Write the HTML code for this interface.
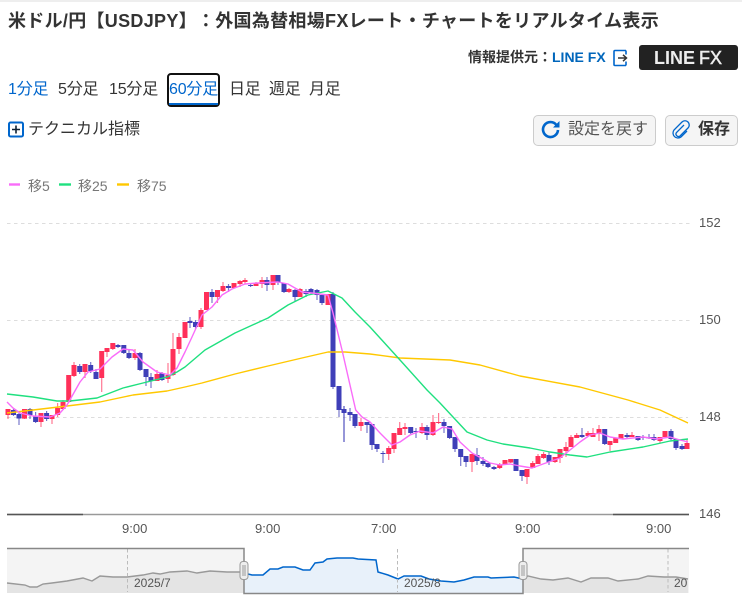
<!DOCTYPE html>
<html lang="ja"><head><meta charset="utf-8"><title>米ドル/円</title>
<style>
html,body{margin:0;padding:0;background:#fff}
#p{position:relative;width:742px;height:614px;overflow:hidden;font-family:"Liberation Sans","Noto Sans CJK JP",sans-serif;color:#333;background:#fff;text-spacing-trim:space-all}
#p div{position:absolute;white-space:nowrap}
.t{font-size:16px;line-height:20px;top:80px;letter-spacing:-.2px}
.b{box-sizing:border-box;background:#f5f5f5;border:1px solid #ccc;border-radius:5px;top:115px;height:31px}
svg{position:absolute;left:0;top:0}
</style></head><body><div id="p">
<div style="left:0;top:0;width:742px;height:2px;background:#eee"></div>
<div style="left:8px;top:9px;font-size:18px;line-height:24px;font-weight:bold;letter-spacing:.3px">米ドル/円【USDJPY】：外国為替相場FXレート・チャートをリアルタイム表示</div>
<div style="left:468px;top:47px;font-size:14px;line-height:20px;font-weight:bold">情報提供元：<span style="color:#0066bb">LINE FX</span></div>
<div style="left:639px;top:45px;width:99px;height:25px;background:#222;border-radius:3px"></div>
<div style="left:654px;top:47px;font-size:18px;line-height:23px;color:#eee;font-weight:bold">LINE <span style="font-weight:normal;margin-left:-1px;-webkit-text-stroke:.5px #eee">FX</span></div>
<div class="t" style="left:8px;color:#0066cc">1分足</div>
<div class="t" style="left:58px">5分足</div>
<div class="t" style="left:109px">15分足</div>
<div style="left:167px;top:73px;width:49px;height:30px;border:2px solid #111;border-radius:4px"></div>
<div style="left:169px;top:103px;width:49px;height:2px;background:#0066cc"></div>
<div class="t" style="left:169px;color:#0066cc">60分足</div>
<div class="t" style="left:229px">日足</div>
<div class="t" style="left:269px">週足</div>
<div class="t" style="left:309px">月足</div>
<div style="left:28px;top:120px;font-size:16px;line-height:20px">テクニカル指標</div>
<div class="b" style="left:533px;width:123px"></div>
<div class="b" style="left:665px;width:73px"></div>
<div style="left:568px;top:120px;font-size:16px;line-height:20px;color:#555">設定を戻す</div>
<div style="left:698px;top:120px;font-size:16px;line-height:20px;font-weight:bold;color:#333">保存</div>
<div style="left:28px;top:177px;font-size:14px;line-height:18px;color:#777">移5</div>
<div style="left:78px;top:177px;font-size:14px;line-height:18px;color:#777">移25</div>
<div style="left:137px;top:177px;font-size:14px;line-height:18px;color:#777">移75</div>
<div style="left:699px;top:215px;font-size:13px;line-height:16px;color:#555">152</div>
<div style="left:699px;top:312px;font-size:13px;line-height:16px;color:#555">150</div>
<div style="left:699px;top:409px;font-size:13px;line-height:16px;color:#555">148</div>
<div style="left:699px;top:506px;font-size:13px;line-height:16px;color:#555">146</div>
<div style="left:122px;top:521px;font-size:13px;line-height:16px;color:#555">9:00</div>
<div style="left:255px;top:521px;font-size:13px;line-height:16px;color:#555">9:00</div>
<div style="left:371px;top:521px;font-size:13px;line-height:16px;color:#555">7:00</div>
<div style="left:515px;top:521px;font-size:13px;line-height:16px;color:#555">9:00</div>
<div style="left:646px;top:521px;font-size:13px;line-height:16px;color:#555">9:00</div>
<svg width="742" height="614" viewBox="0 0 742 614" fill="none">
<!-- icons -->
<path d="M626 50.500h-11a1 1 0 0 0-1 1v13a1 1 0 0 0 1 1h11M626 50.500v4M626 61.500v4" stroke="#0066cc" stroke-width="1.600"/>
<path d="M618 58h8M623 54.800l3.500 3.200-3.500 3.200" stroke="#333" stroke-width="1.500"/>
<rect x="9" y="122.500" width="14" height="14" rx="1.500" stroke="#0066cc" stroke-width="2"/>
<path d="M16 125.500v8M12 129.500h8" stroke="#123" stroke-width="1.600"/>
<path d="M556.500 125a7.500 7.500 0 1 0 1.500 5" stroke="#0066cc" stroke-width="2.600"/>
<path d="M553 127.500h6.500v-6.500z" fill="#0066cc"/>
<path d="M684 125l-7.500 7.500a2.500 2.500 0 0 0 3.500 3.500l8-8a4.200 4.200 0 0 0-6-6l-8 8a5 5 0 0 0 7 7l6-6" stroke="#0066cc" stroke-width="1.300"/>
<!-- legend -->
<path d="M9 184.500h11" stroke="#f96cf9" stroke-width="2.400"/>
<path d="M59 184.500h12" stroke="#1fe07f" stroke-width="2.400"/>
<path d="M117 184.500h12" stroke="#ffc800" stroke-width="2.400"/>
<!-- grid -->
<path d="M7 223.500H692M7 320.500H692M7 417.500H688" stroke="#ddd" stroke-width="1" stroke-dasharray="3.500 3.500"/>
<path d="M7 514.500H689" stroke="#999" stroke-width="1.400"/>
<path d="M7 514.500H83M613 514.500H689" stroke="#555" stroke-width="1.400"/>
<!-- red wicks -->
<path stroke="#ff3059" stroke-opacity=".65" stroke-width="1.200" d="M8 409V419M24.500 409V419M41 413V427M52 415V424M57.600 403V417M63 400V410M68.700 375V403M74 362V377M85 364V378M101.700 351V392M107 348V357M112.800 343V350M135 349V360M157 370V381M168 363V383M173 333V376M179 333V354M185 322V338M201 308V329M206.500 292V310M217.500 290V303M223 282V292M234 283V288M240 280V287M245 278V284M256 282V286M262 277V288M273 275V290M289 288V293M300 288V297M328 294V305M361 418V431M388.700 446V460M394 433V453M399.700 422V435M405 423V435M422 423V434M433 415V436M438.600 413V424M472 454V472M499.700 463V469M505 460V464M510.700 459V463M527 469V484M532.700 461V468M538 454V464M543.600 452V459M555 457V463M560 449V463M566 442V457M571 435V447M576.700 433V438M588 431V436M593 428V437M599 425V441M610 441V451M615.700 438V443M621 434V439M632 432V437M660 437V443M665 431V437M687 439V449"/>
<!-- red bodies -->
<path stroke="#ff3059" stroke-width="5" d="M8 409V415M24.500 409V418.600M41 413V422M52 415V419M57.600 408V415M63 402V409M68.700 375V402M74 365V376M85 364V372M101.700 351V378M107 348V352M112.800 343V349M135 353V358M157 374V381M168 375V379M173 349V375M179 337V349M185 322V338M201 310V327M206.500 292V310M217.500 290V297M223 286V291M234 283V288M240 281V284M245 280V282M256 283V286M262 280V284M273 275V285M289 289V292M300 289V297M328 294V305M361 422V426M388.700 448V454M394 433V449M399.700 428V435M405 427V429M422 427V433M433 422V435M438.600 422V423M472 454V462M499.700 465V468M505 460V464M510.700 459V462.500M527 469V477M532.700 463V468M538 456V464M543.600 454V458M555 457V462M560 449V458M566 447V451M571 437V447M576.700 435V438M588 433V436M593 433V437M599 429V434M610 441V445M615.700 438V443M621 434V439M632 435V437M660 437V441M665 431V437M687 443V449"/>
<!-- blue wicks -->
<path stroke="#3f3fb8" stroke-opacity=".7" stroke-width="1.200" d="M13.500 409V416M19 413V425M30 408V419M35.600 412V423M46.600 411V421M79.700 364V374M90.700 362V373M96 369V379M118 344V348M123.800 345V354M129 350V359M140 352V371M146 369V386M151 373V388M162 372V381M190 317V328M195.500 320V329M212 289V303M228.500 284V292M250.600 283V287M267 277V291M278 275V285M284 283V293M295 289V301M306 289V297M311 288V294M317 289V300M322 295V305M333 292V389M339 386V417M350 408V421M355 414V428M367 422V433M372 424V450M377 444V452M383 451V463M410.700 427V434M416 428V438M427 425V440M444 419V433M449.600 426V439M455 437V452M460.700 449V466M466 456V467M477 448V465M483 457V466M488 463V468M494 466V470M516 459V471M522 470V481M549 452V465M582 428V438M604.700 429V445M627 433V438M638 436V441M643 435V440M649 434V439M654 434V441M671 429V440M676 439V450M682 444V450"/>
<path stroke="#3f3fb8" stroke-width="1.100" d="M344 406V442"/>
<!-- blue bodies -->
<path stroke="#3f3fb8" stroke-width="5" d="M13.500 410V415M19 414V418.500M30 409V415M35.600 416V422M46.600 413V419M79.700 366V372M90.700 365V371M96 372V379M118 345V347M123.800 345V353M129 353V358M140 353V370M146 369V377M151 377V381M162 373V380M190 321V323M195.500 322V327M212 292V297M228.500 286V288M250.600 285V286M267 280V285M278 275V282M284 283V292M295 290V297M306 291V294M311 289V293M317 290V295M322 295V303M333 294V387M339 386V410M344 409V413M350 412V415M355 414V426M367 422V425M372 424V445M377 444V449M383 453V454M410.700 427V433M416 431V432M427 427V435M444 422V426M449.600 426V438M455 437V449M460.700 449V457M466 456V462M477 455V461M483 461V464M488 463V467M494 467V469M516 459V471M522 470V476M549 455V462M582 435V437M604.700 429V444M627 435V437M638 436V440M643 437V438M649 437V438.500M654 437V440M671 431V439M676 439V448M682 446V449"/>
<!-- MAs -->
<path stroke="#ffc800" stroke-width="1.400" stroke-linejoin="round" d="M7 413L33 410 67 406 100 402 133 395 167 391 185 387 202 383 235 374 268 366 302 358 328 352 345 352 370 354 400 358 450 360 480 365 520 376 580 387 628 400 660 410 688 423"/>
<path stroke="#1fe07f" stroke-width="1.400" stroke-linejoin="round" d="M7 394L33 397 57 401 70 401 97 398 123 388 143 383 167 377 177 372 185 367 205 350 235 333 268 318 288 305 308 295 328 291 342 298 355 312 370 327 400 360 427 390 440 403 453 417 467 432 487 440 503 444 530 448 550 452 570 455 587 457 610 452 643 447 670 441 688 439"/>
<path stroke="#f96cf9" stroke-width="1.400" stroke-linejoin="round" d="M7 402L13 408 20 413 33 416 50 417 60 413 67 405 80 382 88 372 100 369 112 357 123 349 133 350 143 362 157 372 170 375 177 368 185 352 192 337 202 315 212 307 222 295 232 289 245 284 258 283 278 282 288 284 302 292 312 293 328 295 333 313 342 350 355.700 410 362 417 370 422 380 433 392 445 400 442 410 435 420 431 433 433 443 427 452 429 460 442 472 453 483 459 490 463 500 465 510 464 520 466 532 468 543 464 560 458 570 450 580 442 590 435 600 433 610 437 623 439 643 437 657 439 670 437 680 440 688 442"/>
<!-- navigator -->
<path fill="#f4f4f4" d="M7 548H244V593H7zM523 548H689V593H523z"/>
<path fill="#e4e4e4" d="M7 583L25 585 30 587 37 587 43 584 52 583 67 581 83 578 92 581 100 576 113 577 127 577 143 575 153 573 160 574 170 572 187 571 197 573 210 571 227 572 244 572V593H7zM523 578L528 576 541 579 553 580 568 578 581 582 591 578 608 578 618 581 638 579 648 576 664 577 676 577 688 579V593H523z"/>
<path fill="#e8f1fa" d="M244 573L252 575 263 575 270 569 278 569 283 567 295 567 303 570 310 570 315 563 323 562 327 559 337 558 353 558 358 559 376 560 378 572 388 575 398 579 404 576 421 576 429 579 441 581 454 582 464 580 474 577 488 577 491 578 514 577 523 579V593H244z"/>
<path stroke="#999" stroke-width="1.400" d="M7 583L25 585 30 587 37 587 43 584 52 583 67 581 83 578 92 581 100 576 113 577 127 577 143 575 153 573 160 574 170 572 187 571 197 573 210 571 227 572 244 572M523 578L528 576 541 579 553 580 568 578 581 582 591 578 608 578 618 581 638 579 648 576 664 577 676 577 688 579"/>
<path stroke="#0066cc" stroke-width="1.500" d="M244 573L252 575 263 575 270 569 278 569 283 567 295 567 303 570 310 570 315 563 323 562 327 559 337 558 353 558 358 559 376 560 378 572 388 575 398 579 404 576 421 576 429 579 441 581 454 582 464 580 474 577 488 577 491 578 514 577 523 579"/>
<path stroke="#bbb" stroke-width="1" stroke-dasharray="3.500 2.500" d="M127.500 549V592M397.500 549V592M668 549V592"/>
<path stroke="#888" stroke-width="1.500" d="M7 548.500H244V593.500H523V548.500H689"/>
<rect x="240" y="561.500" width="8" height="18" rx="3" fill="#eee" stroke="#999"/>
<path d="M243 565v11M245 565v11" stroke="#999" stroke-width="1"/>
<rect x="519" y="561.500" width="8" height="18" rx="3" fill="#eee" stroke="#999"/>
<path d="M522 565v11M524 565v11" stroke="#999" stroke-width="1"/>
</svg>
<div style="left:134px;top:576px;font-size:12px;line-height:14px;color:#555">2025/7</div>
<div style="left:404px;top:576px;font-size:12px;line-height:14px;color:#555">2025/8</div>
<div style="left:674px;top:576px;width:13px;overflow:hidden;font-size:12px;line-height:14px;color:#555">2025/9</div>
</div></body></html>
